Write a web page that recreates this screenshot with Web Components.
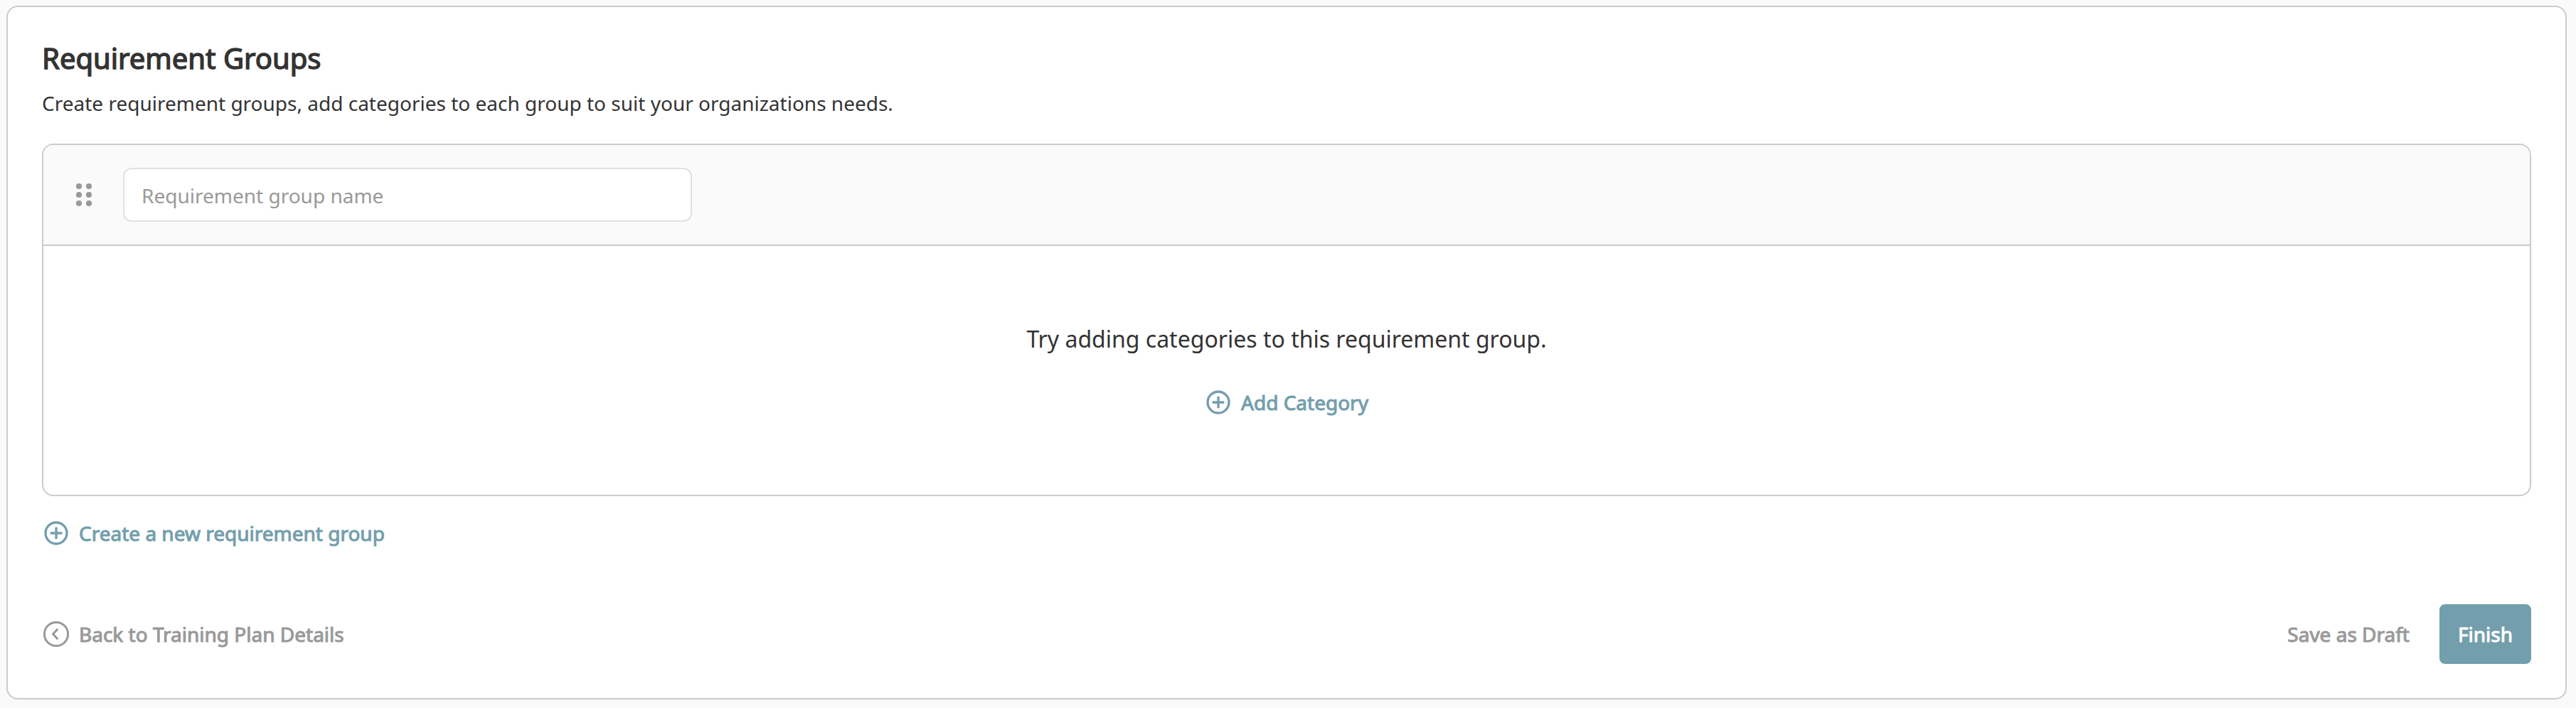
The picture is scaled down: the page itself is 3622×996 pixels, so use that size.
<!DOCTYPE html>
<html lang="en">
<head>
<meta charset="utf-8">
<title>Requirement Groups</title>
<style>
  body {
    margin: 0;
    padding: 8px 13px 12px 9px;
    background: #fafafa;
    color: #333;
    font: 400 28px/40px "Noto Sans", sans-serif;
    --accent: #739eac;
    --muted: #999;
    --line: #cbcbcb;
  }
</style>
</head>
<body>
<page-card>
  <section-heading>
    Requirement Groups
    <span slot="description">Create requirement groups, add categories to each group to suit your organizations needs.</span>
  </section-heading>
  <requirement-group>
    <drag-handle slot="header"></drag-handle>
    <text-field slot="header">Requirement group name</text-field>
    <span slot="message">Try adding categories to this requirement group.</span>
    <link-button icon="plus">Add Category</link-button>
  </requirement-group>
  <link-button icon="plus" style="margin-top:32px">Create a new requirement group</link-button>
  <action-bar>
    <link-button slot="start" icon="back" tone="muted">Back to Training Plan Details</link-button>
    <link-button tone="muted">Save as Draft</link-button>
    <primary-button>Finish</primary-button>
  </action-bar>
</page-card>
<script>
  const define = (name, html, setup) => {
    const template = document.createElement('template');
    template.innerHTML = html;
    customElements.define(name, class extends HTMLElement {
      constructor() {
        super();
        this.attachShadow({ mode: 'open' }).append(template.content.cloneNode(true));
      }
      connectedCallback() { if (setup) setup(this, this.shadowRoot); }
    });
  };

  define('page-card', `
    <style>
      :host { display: flex; flex-direction: column; align-items: stretch; box-sizing: border-box;
        height: 976px; padding: 48px; background: #fff; border: 2px solid var(--line); border-radius: 16px; }
    </style>
    <slot></slot>`);

  define('section-heading', `
    <style>
      :host { display: block; margin-bottom: 36px; }
      h1 { margin: 0 0 18px; font-size: 40px; line-height: 48px; font-weight: 400; -webkit-text-stroke: 1.4px currentColor; }
      p { margin: 0; line-height: 42px; }
    </style>
    <h1><slot></slot></h1>
    <p><slot name="description"></slot></p>`);

  define('requirement-group', `
    <style>
      :host { display: block; box-sizing: border-box; height: 496px; border: 2px solid var(--line);
        border-radius: 16px; overflow: hidden; }
      header { display: flex; align-items: center; gap: 44px; box-sizing: border-box; height: 142px;
        padding: 0 46px; background: #fafafa; border-bottom: 2px solid var(--line); }
      .body { display: flex; flex-direction: column; align-items: center; gap: 45px; padding-top: 107px; }
      .message { font-size: 32px; line-height: 48px; }
      ::slotted(link-button) { margin-right: 1px; }
    </style>
    <header><slot name="header"></slot></header>
    <div class="body">
      <div class="message"><slot name="message"></slot></div>
      <slot></slot>
    </div>`);

  define('drag-handle', `
    <style>
      :host { display: block; width: 22px; height: 32px; }
      svg { display: block; overflow: visible; fill: var(--muted); }
    </style>
    <svg width="22" height="32" viewBox="0 0 22 32">
      <circle cx="4" cy="4" r="4.1"/><circle cx="18" cy="4" r="4.1"/>
      <circle cx="4" cy="16" r="4.1"/><circle cx="18" cy="16" r="4.1"/>
      <circle cx="4" cy="28" r="4.1"/><circle cx="18" cy="28" r="4.1"/>
    </svg>`);

  define('text-field', `
    <style>
      :host { display: flex; align-items: center; box-sizing: border-box; width: 800px; height: 76px;
        padding: 2px 24px 0; background: #fff; border: 2px solid #dee2e6; border-radius: 12px; color: var(--muted); }
    </style>
    <span><slot></slot></span>`);

  const icons = {
    plus: `<svg width="40" height="40" viewBox="0 0 24 24" fill="none" stroke="currentColor" stroke-width="2">
      <circle cx="12" cy="12" r="9"/><path d="M12 7v10M7 12h10"/></svg>`,
    back: `<svg width="40" height="40" viewBox="0 0 40 40" fill="none" stroke="currentColor" stroke-width="3">
      <circle cx="20" cy="20" r="16.6"/><path d="M22.2 12.8L15.6 20l6.6 7.2"/></svg>`
  };

  define('link-button', `
    <style>
      :host { display: flex; align-items: center; height: 40px; color: var(--accent); }
      :host([tone="muted"]) { color: var(--muted); }
      .icon { display: flex; }
      .icon:not(:empty) { margin-right: 12px; }
      svg { display: block; overflow: visible; }
      .label { -webkit-text-stroke: 1px currentColor; white-space: nowrap; }
    </style>
    <span class="icon"></span><span class="label"><slot></slot></span>`,
    (host, root) => { root.querySelector('.icon').innerHTML = icons[host.getAttribute('icon')] || ''; });

  define('primary-button', `
    <style>
      :host { display: flex; align-items: center; height: 84px; padding: 0 26px; margin-left: 42px;
        background: var(--accent); color: #fff; border-radius: 8px; }
      span { -webkit-text-stroke: 1px currentColor; }
    </style>
    <span><slot></slot></span>`);

  define('action-bar', `
    <style>
      :host { display: flex; align-items: center; justify-content: space-between; margin-top: 80px; }
      .end { display: flex; align-items: center; }
    </style>
    <slot name="start"></slot>
    <div class="end"><slot></slot></div>`);
</script>
</body>
</html>
